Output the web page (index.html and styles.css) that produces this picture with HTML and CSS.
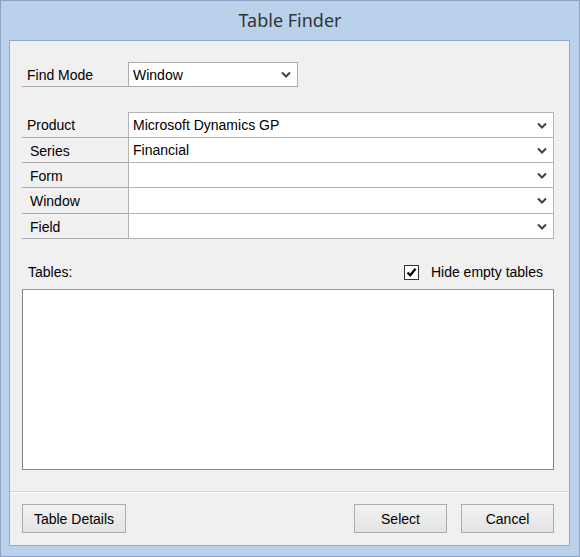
FILE: index.html
```html
<!DOCTYPE html>
<html lang="en">
<head>
    <meta charset="UTF-8">
    <title>Table Finder</title>
    <link rel="stylesheet" href="styles.css">
</head>
<body>
    <div class="window">
        <div class="title-bar">Table Finder</div>

        <div class="client">
            <div class="main">
                <div class="find-mode">
                    <span class="field-label">Find Mode</span>
                    <div class="combo small">
                        <span>Window</span>
                        <svg class="chevron" width="10" height="7" viewBox="0 0 10 7"><polyline points="1,1.5 5,5.5 9,1.5" fill="none" stroke="#404040" stroke-width="2"/></svg>
                    </div>
                </div>

                <div class="grid">
                    <div class="grid-row">
                        <span class="field-label first">Product</span>
                        <div class="combo cell">
                            <span>Microsoft Dynamics GP</span>
                            <svg class="chevron" width="10" height="7" viewBox="0 0 10 7"><polyline points="1,1.5 5,5.5 9,1.5" fill="none" stroke="#404040" stroke-width="2"/></svg>
                        </div>
                    </div>
                    <div class="grid-row">
                        <span class="field-label">Series</span>
                        <div class="combo cell">
                            <span>Financial</span>
                            <svg class="chevron" width="10" height="7" viewBox="0 0 10 7"><polyline points="1,1.5 5,5.5 9,1.5" fill="none" stroke="#404040" stroke-width="2"/></svg>
                        </div>
                    </div>
                    <div class="grid-row">
                        <span class="field-label">Form</span>
                        <div class="combo cell">
                            <span></span>
                            <svg class="chevron" width="10" height="7" viewBox="0 0 10 7"><polyline points="1,1.5 5,5.5 9,1.5" fill="none" stroke="#404040" stroke-width="2"/></svg>
                        </div>
                    </div>
                    <div class="grid-row tall">
                        <span class="field-label">Window</span>
                        <div class="combo cell">
                            <span></span>
                            <svg class="chevron" width="10" height="7" viewBox="0 0 10 7"><polyline points="1,1.5 5,5.5 9,1.5" fill="none" stroke="#404040" stroke-width="2"/></svg>
                        </div>
                    </div>
                    <div class="grid-row">
                        <span class="field-label">Field</span>
                        <div class="combo cell">
                            <span></span>
                            <svg class="chevron" width="10" height="7" viewBox="0 0 10 7"><polyline points="1,1.5 5,5.5 9,1.5" fill="none" stroke="#404040" stroke-width="2"/></svg>
                        </div>
                    </div>
                </div>

                <div class="tables-head">
                    <span class="tables-label">Tables:</span>
                    <label class="check">
                        <span class="check-box">
                            <svg width="11" height="11" viewBox="0 0 11 11"><polyline points="1.5,5.5 4.2,8.3 9.5,1.8" fill="none" stroke="#000" stroke-width="2.2"/></svg>
                        </span>
                        Hide empty tables
                    </label>
                </div>

                <div class="list-box"></div>
            </div>

            <div class="button-bar">
                <button class="btn details">Table Details</button>
                <div class="btn-group">
                    <button class="btn">Select</button>
                    <button class="btn">Cancel</button>
                </div>
            </div>
        </div>
    </div>
</body>
</html>
```

FILE: styles.css
```css
html, body {
    margin: 0;
    padding: 0;
    height: 100%;
    font-family: 'Liberation Sans', Arial, sans-serif;
    font-size: 14px;
    color: #000;
}

.window {
    box-sizing: border-box;
    width: 580px;
    height: 557px;
    background: #b9d1ea;
    border: 1px solid #8ba3c0;
    display: flex;
    flex-direction: column;
}

.title-bar {
    height: 39px;
    line-height: 39px;
    text-align: center;
    font-family: 'Noto Sans', 'Open Sans', sans-serif;
    font-size: 18px;
    color: #333;
}

.client {
    flex: 1;
    margin: 0 9px 10px 8px;
    background: #f0f0f0;
    border: 1px solid #95aac4;
    display: flex;
    flex-direction: column;
}

.main {
    flex: 1;
    padding: 21px 14px 0 12px;
    border-bottom: 1px solid #d5d5d5;
    box-shadow: 0 1px 0 #fcfcfc;
}

.find-mode {
    display: flex;
    height: 25px;
}

.field-label {
    box-sizing: border-box;
    width: 106px;
    height: 25px;
    line-height: 26px;
    padding-left: 8px;
    border-bottom: 1px solid #a9a9a9;
    flex-shrink: 0;
}

.find-mode .field-label,
.field-label.first {
    padding-left: 5px;
}

.combo {
    box-sizing: border-box;
    height: 25px;
    background: #fff;
    border: 1px solid #b4b4b4;
    display: flex;
    align-items: center;
    justify-content: space-between;
    padding: 0 6px 0 4px;
}

.combo.small {
    width: 170px;
    border-color: #acacac;
}

.chevron {
    display: block;
}

.grid {
    margin-top: 25px;
    width: 532px;
}

.grid-row {
    display: flex;
}

.combo.cell {
    flex: 1;
    border-top: none;
}

.grid-row:first-child .field-label,
.grid-row:first-child .combo.cell {
    height: 26px;
}

.grid-row:first-child .combo.cell {
    border-top: 1px solid #b4b4b4;
}

.grid-row.tall .field-label,
.grid-row.tall .combo.cell {
    height: 26px;
}

.tables-head {
    height: 50px;
    display: flex;
    align-items: flex-end;
    justify-content: space-between;
    padding: 0 11px 0 6px;
    width: 515px;
}

.tables-label {
    margin-bottom: 9px;
}

.check {
    display: flex;
    align-items: center;
    gap: 12px;
    margin-bottom: 9px;
}

.check-box {
    box-sizing: border-box;
    width: 15px;
    height: 15px;
    border: 1px solid #333;
    background: #fff;
    display: flex;
    align-items: center;
    justify-content: center;
}

.list-box {
    box-sizing: border-box;
    width: 532px;
    height: 181px;
    background: #fff;
    border: 1px solid #828790;
    border-top-color: #999;
}

.button-bar {
    height: 53px;
    display: flex;
    align-items: center;
    justify-content: space-between;
    padding: 0 15px 0 12px;
}

.btn {
    box-sizing: border-box;
    height: 29px;
    width: 93px;
    font-family: 'Liberation Sans', Arial, sans-serif;
    font-size: 14px;
    color: #000;
    background: linear-gradient(#f2f2f2, #e3e3e3);
    border: 1px solid #acacac;
    border-radius: 0;
    padding: 0;
}

.btn.details {
    width: 104px;
}

.btn-group {
    display: flex;
    gap: 14px;
}
```
